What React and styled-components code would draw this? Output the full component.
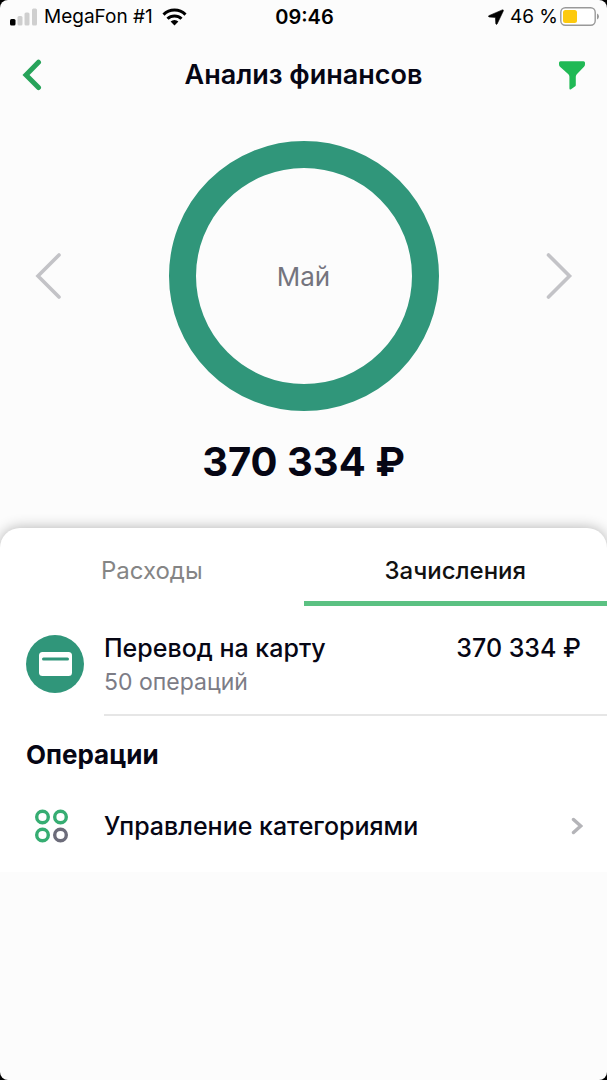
import React, { useState } from "react";
import styled, { createGlobalStyle } from "styled-components";

const tabs = ["Расходы", "Зачисления"];

function App() {
  const [active, setActive] = useState("Зачисления");

  return (
    <>
      <GlobalStyle />
      <Screen>
        <StatusBar>
          <StatusGroup>
            <SignalIcon />
            <span>MegaFon #1</span>
            <WifiIcon />
          </StatusGroup>
          <Time>09:46</Time>
          <StatusGroup $end>
            <LocationIcon />
            <span>46 %</span>
            <BatteryIcon />
          </StatusGroup>
        </StatusBar>

        <Header>
          <IconButton aria-label="Назад">
            <svg width="28" height="32" viewBox="0 0 28 32" fill="none">
              <path
                d="M17.500 3.200 5 15.900l12.500 12.600"
                stroke="#27a35a"
                strokeWidth="5"
                strokeLinecap="round"
              />
            </svg>
          </IconButton>
          <Title>Анализ финансов</Title>
          <IconButton aria-label="Фильтр">
            <svg width="28" height="30" viewBox="0 0 28 30">
              <path
                d="M2.500 1.200h23q1.500 0 1.500 1.600v1.400q0 1.500-1 2.600l-7.200 7.400q-1 1-1 2.500v8.300q0 1-.9 1.600l-3.900 2.700q-1.600.7-1.600-1V16.700q0-1.500-1-2.500L2 6.800Q1 5.700 1 4.200V2.800q0-1.600 1.500-1.600z"
                fill="#20b955"
              />
            </svg>
          </IconButton>
        </Header>

        <Summary>
          <Period>
            <IconButton aria-label="Предыдущий месяц">
              <Arrow />
            </IconButton>
            <Ring>Май</Ring>
            <IconButton aria-label="Следующий месяц">
              <Arrow right />
            </IconButton>
          </Period>
          <Amount>370 334 ₽</Amount>
        </Summary>

        <Sheet>
          <TabList role="tablist">
            {tabs.map((tab) => (
              <Tab
                key={tab}
                role="tab"
                aria-selected={tab === active}
                $active={tab === active}
                onClick={() => setActive(tab)}
              >
                {tab}
              </Tab>
            ))}
          </TabList>

          <Category>
            <CategoryIcon>
              <svg width="34" height="24" viewBox="0 0 34 24">
                <rect x="1" width="33" height="24" rx="3.500" fill="#fff" />
                <path
                  d="M5.500 7h24"
                  stroke="#30967a"
                  strokeWidth="3"
                  strokeLinecap="round"
                />
              </svg>
            </CategoryIcon>
            <CategoryBody>
              <div>
                <RowText>Перевод на карту</RowText>
                <Count>50 операций</Count>
              </div>
              <RowText>370 334 ₽</RowText>
            </CategoryBody>
          </Category>

          <SectionTitle>Операции</SectionTitle>
          <ManageButton>
            <ManageIcon>
              <svg
                width="34"
                height="34"
                viewBox="0 0 34 34"
                fill="none"
                stroke="#36ad72"
                strokeWidth="3.400"
              >
                <circle cx="8.500" cy="8" r="5.800" />
                <circle cx="26.500" cy="8" r="5.800" />
                <circle cx="8.500" cy="26" r="5.800" />
                <circle cx="26.500" cy="26" r="5.800" stroke="#6c6c7a" />
              </svg>
            </ManageIcon>
            <RowText>Управление категориями</RowText>
            <svg width="12" height="18" viewBox="0 0 12 18" fill="none">
              <path
                d="m2.500 2.500 7.200 6.500-7.200 6.500"
                stroke="#b4b4b8"
                strokeWidth="3.400"
                strokeLinecap="round"
              />
            </svg>
          </ManageButton>
        </Sheet>
      </Screen>
    </>
  );
}

const Arrow = ({ right }) => (
  <svg width="28" height="48" viewBox="0 0 28 48" fill="none">
    <path
      d={right ? "M3.500 3l21 21-21 21" : "M25 3 4 24l21 21"}
      stroke="#c3c3c7"
      strokeWidth="3.600"
      strokeLinecap="round"
    />
  </svg>
);

const SignalIcon = () => (
  <svg width="28" height="18" viewBox="0 0 28 18" fill="#cfcfcf">
    <rect x="0" y="11" width="5.500" height="6.500" rx="1.500" fill="#000" />
    <rect x="7.500" y="8" width="5" height="9.500" rx="1.500" />
    <rect x="14.500" y="4.500" width="5" height="13" rx="1.500" />
    <rect x="22" y="0.500" width="5" height="17" rx="1.500" />
  </svg>
);

const WifiIcon = () => (
  <svg width="28" height="18" viewBox="-3 0 28 18" fill="none">
    <path
      d="M1.500 6.600a15.600 15.600 0 0 1 22 0M5.500 10.800a10 10 0 0 1 14 0"
      stroke="#000"
      strokeWidth="3"
    />
    <path d="m12.500 17.600-3.900-4a5.600 5.600 0 0 1 7.800 0z" fill="#000" />
  </svg>
);

const LocationIcon = () => (
  <svg width="20" height="16" viewBox="0 0 20 16">
    <path
      d="M14.300.9.800 6.700q-1 .8.300 1.300l6.300.4.400 6.300q.5 1.300 1.300.3l6.200-13Q15.600.4 14.300.9z"
      fill="#000"
      stroke="#000"
      strokeWidth="0.600"
    />
  </svg>
);

const BatteryIcon = () => (
  <svg width="39" height="19" viewBox="0 0 39 19">
    <rect
      x="0.800"
      y="0.800"
      width="34.400"
      height="17.400"
      rx="4.500"
      fill="#fff"
      stroke="#999"
      strokeWidth="1.400"
    />
    <rect x="3" y="3" width="14" height="13" rx="2.500" fill="#fdca0e" />
    <path d="M37 6.500q2 .8 2 3t-2 3z" fill="#999" />
  </svg>
);

const GlobalStyle = createGlobalStyle`
  * {
    box-sizing: border-box;
  }
  body {
    margin: 0;
    background: #000;
    font-family: Inter, "Noto Sans", sans-serif;
    color: #060614;
  }
  button {
    padding: 0;
    border: 0;
    background: none;
    font: inherit;
    color: inherit;
    cursor: pointer;
  }
  svg {
    display: block;
    flex-shrink: 0;
  }
`;

const Screen = styled.main`
  min-height: 100vh;
  background: #fcfcfc;
  border-radius: 8px;
  overflow: hidden;
`;

const StatusBar = styled.div`
  display: grid;
  grid-template-columns: 1fr auto 1fr;
  align-items: center;
  height: 33px;
  padding: 0 8px 0 10px;
  font-size: 19px;
  color: #000;
`;

const StatusGroup = styled.div`
  display: flex;
  align-items: center;
  justify-content: ${(props) => (props.$end ? "flex-end" : "flex-start")};
  gap: ${(props) => (props.$end ? "2px" : "6px")};
  white-space: nowrap;
`;

const Time = styled.div`
  font-size: 20px;
  font-weight: 600;
`;

const Header = styled.header`
  display: flex;
  align-items: center;
  justify-content: space-between;
  height: 84px;
  padding: 0 21px;
`;

const Title = styled.h1`
  margin: 0;
  font-size: 27px;
  font-weight: 600;
  line-height: 34px;
`;

const IconButton = styled.button`
  display: flex;
`;

const Summary = styled.section`
  padding: 24px 34px 41px;
`;

const Period = styled.div`
  display: flex;
  align-items: center;
  justify-content: space-between;
`;

const Ring = styled.div`
  display: flex;
  align-items: center;
  justify-content: center;
  width: 270px;
  height: 270px;
  border: 27px solid #30967a;
  border-radius: 50%;
  font-size: 26px;
  color: #74747e;
`;

const Amount = styled.div`
  margin-top: 26px;
  font-size: 40px;
  font-weight: 700;
  line-height: 50px;
  text-align: center;
`;

const Sheet = styled.section`
  background: #fff;
  border-radius: 20px 20px 0 0;
  box-shadow: 0 0 14px rgba(0, 0, 0, 0.3);
  clip-path: inset(-20px 0 0 0);
`;

const TabList = styled.div`
  display: flex;
  height: 78px;
`;

const Tab = styled.button`
  flex: 1;
  padding-top: 12px;
  border-bottom: 5px solid
    ${(props) => (props.$active ? "#5bc182" : "transparent")};
  font-size: 24px;
  font-weight: ${(props) => (props.$active ? 500 : 400)};
  color: ${(props) => (props.$active ? "#111" : "#858585")};
`;

const Category = styled.div`
  display: flex;
  align-items: center;
  gap: 20px;
  padding-left: 26px;
`;

const CategoryIcon = styled.div`
  display: flex;
  align-items: center;
  justify-content: center;
  width: 58px;
  height: 58px;
  margin-top: 6px;
  border-radius: 50%;
  background: #30967a;
`;

const CategoryBody = styled.div`
  display: flex;
  flex: 1;
  justify-content: space-between;
  height: 110px;
  padding: 25px 26px 0 0;
  border-bottom: 2px solid #e6e6e6;
`;

const RowText = styled.div`
  font-size: 25px;
  font-weight: 500;
  line-height: 34px;
`;

const Count = styled.div`
  font-size: 23px;
  line-height: 34px;
  color: #7c7c86;
`;

const SectionTitle = styled.h2`
  margin: 0;
  padding: 22px 26px 0;
  font-size: 26px;
  font-weight: 700;
  line-height: 34px;
`;

const ManageButton = styled.button`
  display: flex;
  align-items: center;
  gap: 20px;
  width: 100%;
  height: 100px;
  padding: 8px 24px 0 26px;
  text-align: left;

  ${RowText} {
    flex: 1;
  }
`;

const ManageIcon = styled.span`
  display: flex;
  width: 58px;
  padding-left: 8px;
`;

export default App;
